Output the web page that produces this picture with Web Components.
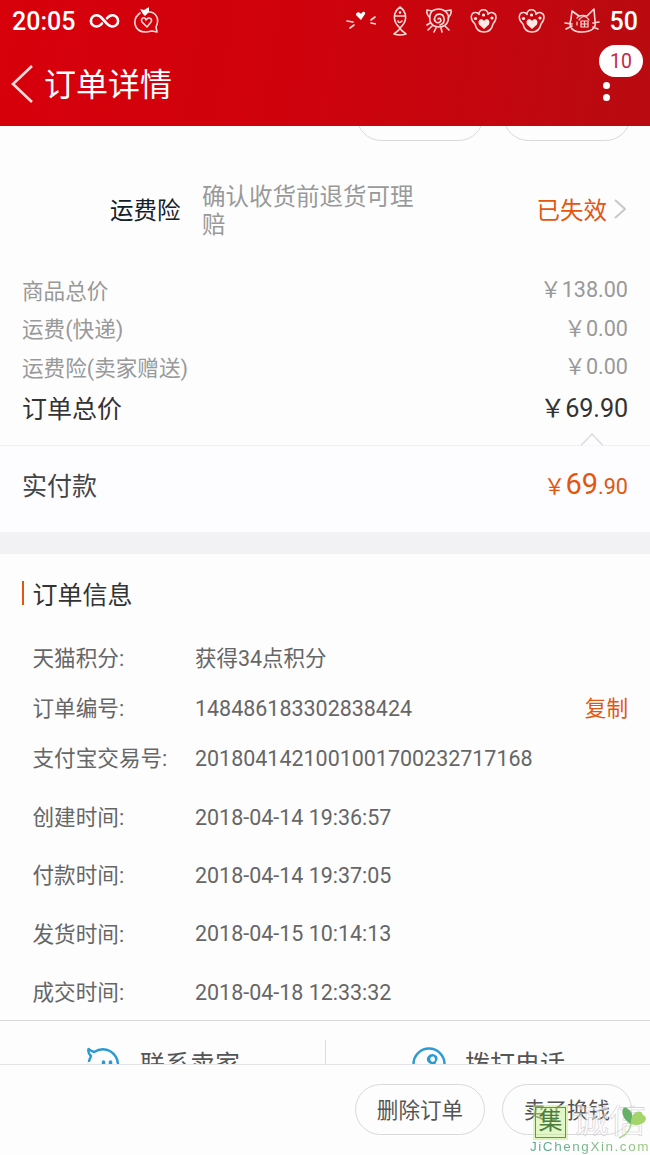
<!DOCTYPE html>
<html lang="zh-CN">
<head>
<meta charset="utf-8">
<title>订单详情</title>
<style>
body{margin:0;background:#fdfdfd;font-family:Roboto,"Noto Sans CJK SC",sans-serif}
</style>
</head>
<body>
<order-page></order-page>
<script>
const define=(name,html)=>customElements.define(name,class extends HTMLElement{
  constructor(){super();this.attachShadow({mode:'open'}).innerHTML=html;}
});

define('paw-icon',`<style>
:host{display:block;flex:none}
svg{display:block;fill:none;stroke:#ffd9d6;stroke-width:1.500;stroke-linecap:round;stroke-linejoin:round}
.f{fill:#ffe9e7;stroke:none}
</style>
<svg width="28" height="28" viewBox="0 0 28 28"><path d="M5 17C-1 12 1 5 6 5.500q2 0 3 2C9 1 18 1 18 7.500c2-3.500 8-2 8 2.500 0 3-1 5-3 7-1 5-4 8-9 8s-8-3-9-8z"/><path class="f" d="M14 22l-5-4.500c-2-5 3-7 5-3.500 2-3.500 7-1.500 5 3.500z"/><g class="f"><circle cx="5.500" cy="11.500" r="1.600"/><circle cx="13.500" cy="8" r="1.600"/><circle cx="22" cy="11" r="1.600"/></g></svg>`);

define('status-bar',`<style>
:host{display:flex;height:42px;box-sizing:border-box;padding:0 12px 0 12px;align-items:center;color:#fff}
b{font-weight:500;font-size:25px;line-height:44px;padding-top:1px}
svg{display:block;fill:none;stroke:#ffd9d6;stroke-width:1.6;stroke-linecap:round;stroke-linejoin:round;flex:none}
.f{fill:#fff;stroke:none}
</style>
<b style="width:77px">20:05</b>
<svg width="31" height="18" viewBox="0 0 31 18" style="stroke:#fff;stroke-width:2.6"><path d="M13 11.500C11 14 9.500 14.500 7.500 14.500a5.600 5.600 0 0 1 0-11.200c4 0 5 2.500 8 5.700s4.500 5.500 8 5.500a5.600 5.600 0 0 0 0-11.200c-2.200 0-3.800.9-5.500 3"/></svg>
<svg width="28" height="30" viewBox="0 0 28 30" style="margin-left:13px"><path d="M7 7C-1 13 0 26 13 26c3 0 5-1 6-1l5 1-1-5C27 13 23 6 16 6"/><path d="M14 21l-5-5c-2-4 3-6 4-2 3-4 7-1 5 2z"/><path class="f" d="M10 8L7 3l4 1 5-3v5l-4 4z"/></svg>
<span style="flex:1"></span>
<svg width="31" height="24" viewBox="0 0 31 24"><path d="M2 12l6 1M5 19l4-3M26 11l4-3M26 14l5 1"/><path class="f" d="M16 11l-5-5c0-4 4-3 5-1 2-4 5-2 4 0z"/></svg>
<svg width="18" height="34" viewBox="0 0 18 34" style="margin-left:15px"><path d="M9 3C1 9 2 18 9 24c7-6 8-15 0-21zM4 12h10M7 17q1 3 4 0M9 24c-1 3-4 4-6 6q6 2 12 0c-2-2-5-3-6-6z"/><circle class="f" cx="9" cy="8.500" r="1.200"/></svg>
<svg width="28" height="30" viewBox="0 0 28 30" style="margin-left:16px"><path d="M7 5l-5-1q-1 4 3 8M20 5l6-1q1 4-3 8M7 5q7-4 13 0 5 4 3 10-2 6-9 6-7 0-9-6-1-6 2-10M13 13c2-2 4 1 2 3-3 2-7-1-5-5 2-4 8-4 9 1 1 4-1 6-4 7M5 17l-3 2M7 20l-4 4M11 22l-2 4M16 22l1 4M20 20l4 4"/></svg>
<paw-icon style="margin-left:17px"></paw-icon>
<paw-icon style="margin-left:20px"></paw-icon>
<svg width="36" height="30" viewBox="0 0 36 30" style="margin:0 10px 0 18px"><path d="M7 13L8 5l7 5q4-1 8 0l7-7 1 12c2 7-4 11-13 11S4 22 7 13M1 17l7 1M2 23l6-3M29 17l6-1M29 21l5 2"/><path stroke-width="1.200" d="M17 15h7v6h-7zM20.500 15v6M17 18h7M15 14q5-7 10 0M13 19v-3M13 12l2-2"/></svg>
<b>50</b>`);

define('nav-bar',`<style>
:host{display:flex;position:relative;height:84px;color:#fff;align-items:center;box-sizing:border-box;padding-left:11px}
h1{font-size:32px;font-weight:400;line-height:40px;margin:1px 0 0 10px}
.more{display:grid;gap:5px;margin:14px 40px 0 auto}
.more i{width:7px;height:7px;border-radius:50%;background:#fff}
.badge{position:absolute;right:7px;top:3px;width:44px;height:32px;border-radius:17px;background:#fff;color:#c4264b;font-size:19.500px;line-height:34px;text-align:center}
</style>
<svg width="23" height="40" viewBox="0 0 23 40" fill="none" stroke="#ffdcda" stroke-width="2.600"><path d="M21 2L2 20l19 18"/></svg>
<h1><slot></slot></h1><span class="more"><i></i><i></i></span><span class="badge">10</span>`);

define('pill-button',`<style>
:host{display:block;box-sizing:border-box;width:130px;height:51px;border:1px solid #d9d9d9;border-radius:26px;text-align:center;font-size:21.6px;line-height:51px;color:#555}
</style><slot></slot>`);

define('insurance-row',`<style>
:host{display:flex;height:124px;box-sizing:border-box;align-items:center;padding:2px 24px 0 110px;font-size:23.5px;line-height:28px}
.n{color:#132029;width:92px}.d{color:#999;width:224px;word-break:break-all}
.s{color:#e3560f;margin-left:auto;margin-right:7px}
svg{margin-bottom:4px}
</style><span class="n">运费险</span><span class="d">确认收货前退货可理赔</span><span class="s">已失效</span>
<svg width="12" height="20" viewBox="0 0 12 20" fill="none" stroke="#c8c8c8" stroke-width="2"><path d="M1 1l10 9-10 9"/></svg>`);

define('price-row',`<style>
:host{display:flex;justify-content:space-between;align-items:center;height:34.500px;padding:0 22px 4px;font-size:21.6px;color:#999}
:host([total]){font-size:25px;height:39px;color:#333}
:host([total]) .v{font-size:25.200px;letter-spacing:-.1px}
:host([pay]){font-size:25px;height:76px;padding-bottom:10px;color:#444;background:#fdfcfe;border-top:1px solid #f0f0f2}
:host([pay]) .v{font-size:21.6px;color:#e3560f;padding:1px 0 0}
.v{padding-bottom:3px}
</style><span><slot></slot></span><span class="v"><slot name="value"></slot></span>`);

define('info-row',`<style>
:host{display:flex;align-items:center;height:50px;padding:0 22px 0 32.500px;font-size:21.6px;color:#666}
:host([tall]){height:58.300px}
.l{width:162.500px;padding-bottom:2px;white-space:nowrap}.d{font-size:21.460px;padding-top:1px}.a{margin-left:auto;color:#e3560f;padding-bottom:2px}
:host([cjk]) .d{padding:0 0 2px}
</style><span class="l"><slot name="label"></slot></span><span class="d"><slot></slot></span><span class="a"><slot name="action"></slot></span>`);

define('section-title',`<style>
:host{display:flex;align-items:center;gap:8.500px;height:79px;padding-left:21.500px;font-size:25px;color:#333}
i{width:2.500px;height:24px;background:#e3560f}
span{padding-bottom:1px}
</style><i></i><span><slot></slot></span>`);

define('contact-links',`<style>
:host{display:grid;grid-template-columns:1fr 1fr;border-top:1px solid #d9d9db;height:86px;font-size:25px;color:#555;margin-top:-1px}
div{display:flex;align-items:center;gap:18px;padding-left:85px}
div+div{position:relative;padding-left:87px}
div+div::before{content:"";position:absolute;left:0;top:19px;height:48px;width:1px;background:#dcdcdf}
span{padding-bottom:4px}
svg{fill:none;stroke:#2c9ad2;stroke-width:2.400;stroke-linecap:round;stroke-linejoin:round}
</style>
<div><svg width="37" height="36" viewBox="0 0 37 36"><path d="M9 6q8-5 16-1 8 5 8 14c0 9-7 15-15 15S2 27 3 19M4 15l2-5M9 6Q6 5 3.500 3q-1 4 2.500 7"/><path stroke-width="3.500" d="M18.500 16v3M25.500 16v3"/></svg><span>联系卖家</span></div>
<div><svg width="35" height="36" viewBox="0 0 35 36"><circle cx="17" cy="18" r="15.500"/><path d="M23 16a3.500 4 0 1 1 1-2c2-5-6-7-8-1 0 6 8 2 8 8 0 5-6 7-12 5"/></svg><span>拨打电话</span></div>`);

define('site-watermark',`<style>
:host{position:absolute;right:0;bottom:0;width:122px;height:50px;overflow:hidden;pointer-events:none}
.t{display:flex;height:34px;align-items:center}
.box{margin-left:7px;width:31px;height:31px;box-sizing:border-box;border:1.500px solid #5d9a45;outline:2px solid rgba(190,235,120,.5);background:rgba(200,240,145,.5);color:#4a7d3c;font-size:24px;line-height:27px;text-align:center;flex:none}
.o{font-size:37px;line-height:34px;color:rgba(255,255,255,.5);-webkit-text-stroke:.6px #d2ced3;margin-left:6px;margin-top:-2px;white-space:nowrap}
.u{font-family:"Liberation Sans",sans-serif;font-size:13.500px;line-height:16px;letter-spacing:1.550px;white-space:nowrap;margin-left:2px;background:linear-gradient(90deg,#56a592,#9bc67c);-webkit-background-clip:text;color:transparent}
svg{position:absolute;right:3px;top:1px}
</style>
<div class="t"><span class="box">集</span><span class="o">诚信</span></div><div class="u">JiChengXin.com</div>
<svg width="30" height="34" viewBox="0 0 30 34"><path d="M2 32Q13 27 14 18" fill="none" stroke="#a9d48c" stroke-width="1.500"/><path d="M14 18C2 12 4-3 11 3q7 4 3 15z" fill="#67b06c"/><path d="M14 18C13 6 24 2 26 9c8 4-2 13-12 9z" fill="#a3d56b"/></svg>`);

define('order-page',`<style>
:host{display:grid;grid-template-rows:126px 938px 91px;height:1155px;position:relative;overflow:hidden;background:#fdfdfd}
header{background:linear-gradient(100deg,#d7000b 0%,#cf020c 45%,#c4060f 75%,#b80b11 100%)}
main{overflow:hidden}
.top{display:flex;justify-content:flex-end;align-items:flex-end;height:15px;gap:19px;padding:0 19px 7px 0}
.fold{display:flex;justify-content:flex-end;align-items:flex-end;height:15px;padding-right:46px;margin-bottom:-1px}
.gap{height:22px;background:#f2f1f4}
.sp{height:5px}
big{font-size:29px}
footer{display:flex;justify-content:flex-end;gap:17px;padding:19px 18px 0 0;border-top:1px solid #e3e3e5}
footer pill-button{flex:none}
</style>
<header><status-bar></status-bar><nav-bar>订单详情</nav-bar></header>
<main>
<div class="top"><pill-button style="width:128px"></pill-button><pill-button style="width:128px"></pill-button></div>
<insurance-row></insurance-row>
<price-row>商品总价<span slot="value">￥138.00</span></price-row>
<price-row>运费(快递)<span slot="value">￥0.00</span></price-row>
<price-row>运费险(卖家赠送)<span slot="value">￥0.00</span></price-row>
<price-row total>订单总价<span slot="value">￥69.90</span></price-row>
<div class="fold"><svg width="24" height="13" viewBox="0 0 24 13" fill="#fdfcfe" stroke="#dcdcdc" stroke-width="1.500"><path d="M1 12.500L12 1l11 11.500"/></svg></div>
<price-row pay>实付款<span slot="value">￥<big>69</big>.90</span></price-row>
<div class="gap"></div>
<section-title>订单信息</section-title>
<info-row cjk><span slot="label">天猫积分:</span>获得34点积分</info-row>
<info-row><span slot="label">订单编号:</span>148486183302838424<span slot="action">复制</span></info-row>
<info-row><span slot="label">支付宝交易号:</span>2018041421001001700232717168</info-row>
<div class="sp"></div>
<info-row tall><span slot="label">创建时间:</span>2018-04-14 19:36:57</info-row>
<info-row tall><span slot="label">付款时间:</span>2018-04-14 19:37:05</info-row>
<info-row tall><span slot="label">发货时间:</span>2018-04-15 10:14:13</info-row>
<info-row tall><span slot="label">成交时间:</span>2018-04-18 12:33:32</info-row>
<contact-links></contact-links>
</main>
<footer><pill-button>删除订单</pill-button><pill-button>卖了换钱</pill-button></footer>
<site-watermark></site-watermark>`);
</script>
</body>
</html>
